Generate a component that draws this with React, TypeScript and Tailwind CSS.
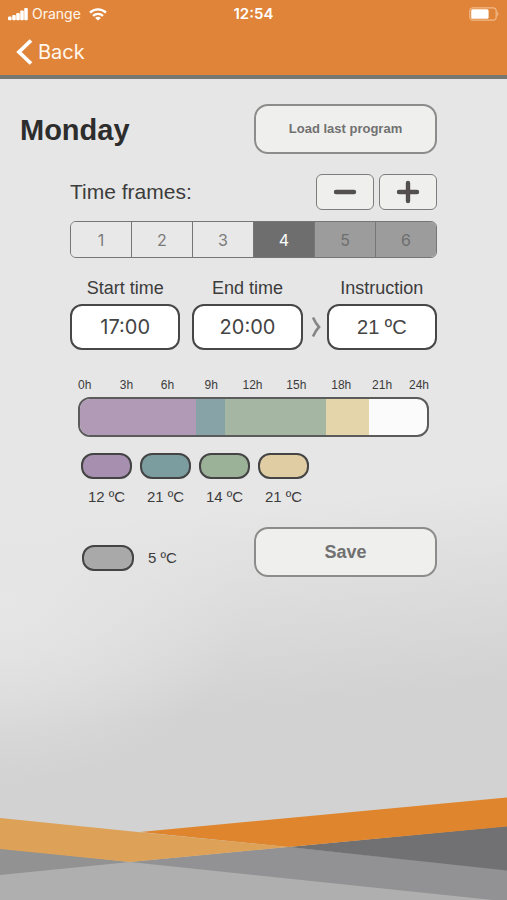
import { useState } from 'react';

const frames = [1, 2, 3, 4, 5, 6];
const frameCount = 4;

const fields = [
  { id: 'start', label: 'Start time', value: '17:00', font: 'font-[Inter,sans-serif]' },
  { id: 'end', label: 'End time', value: '20:00', font: 'font-[Inter,sans-serif]' },
  { id: 'instruction', label: 'Instruction', value: '21 ºC', font: '' },
];

const hours = ['0h', '3h', '6h', '9h', '12h', '15h', '18h', '21h', '24h'];

const slots = [
  { from: 0, to: 8, temp: '12 ºC', bar: 'bg-[#b09ab6]', pill: 'bg-[#a78fb0]' },
  { from: 8, to: 10, temp: '21 ºC', bar: 'bg-[#88a3a8]', pill: 'bg-[#7b9da0]' },
  { from: 10, to: 17, temp: '14 ºC', bar: 'bg-[#a5b7a2]', pill: 'bg-[#9bb198]' },
  { from: 17, to: 20, temp: '21 ºC', bar: 'bg-[#e5d5ab]', pill: 'bg-[#e0cda3]' },
];

const StatusBar = () => (
  <div className="grid h-7 grid-cols-3 items-center px-2 text-white">
    <div className="flex items-center gap-1">
      <svg width="20" height="13" viewBox="0 0 20 13" fill="currentColor" aria-hidden="true">
        <rect x="0" y="8.5" width="3.6" height="3.8" rx="1" />
        <rect x="4.2" y="7" width="3.6" height="5.3" rx="1" />
        <rect x="8.2" y="5" width="3.6" height="7.3" rx="1" />
        <rect x="12.2" y="2.5" width="3.6" height="9.8" rx="1" />
        <rect x="16.2" y="0" width="3.6" height="12.3" rx="1" />
      </svg>
      <span className="text-sm text-orange-50">Orange</span>
      <svg className="ml-1" width="18" height="13" viewBox="0 0 18 13" fill="none" stroke="currentColor" strokeWidth="2.4" aria-hidden="true">
        <path d="M1 4.6a11.6 11.6 0 0 1 16 0" />
        <path d="M4 7.8a7.4 7.4 0 0 1 10 0" />
        <path d="M9 12.6 6.1 9.9a4.4 4.4 0 0 1 5.8 0Z" fill="currentColor" stroke="none" />
      </svg>
    </div>
    <span className="text-center text-[15px] font-semibold">12:54</span>
    <svg className="justify-self-end" width="30" height="14" viewBox="0 0 30 14" aria-hidden="true">
      <rect x="0.8" y="0.8" width="26.4" height="12.4" rx="3.2" fill="none" stroke="#f0b987" strokeWidth="1.2" />
      <rect x="2.2" y="2.2" width="17.4" height="9.6" rx="1.6" fill="#fff" />
      <path d="M28.2 4.6c1.6.6 1.6 4.2 0 4.8Z" fill="#f0b987" />
    </svg>
  </div>
);

const Waves = () => (
  <svg className="mt-auto block h-[103px] w-full" viewBox="0 0 507 103" preserveAspectRatio="none" aria-hidden="true">
    <path d="M0 51 130 65 288 50 507 72V103H0Z" fill="#afafaf" />
    <path d="M0 51 130 65 0 78Z" fill="#929292" />
    <path d="M130 65 288 50 507 73V104.500Z" fill="#929294" />
    <path d="M288 50 507 29V73.500Z" fill="#717173" />
    <path d="M140 35 507 0.500V29.500L288 50Z" fill="#df852d" />
    <path d="M0 21 140 35.200 288 50 130 65 0 52Z" fill="#dda157" />
  </svg>
);

export default function App() {
  const [active, setActive] = useState(4);

  return (
    <div className="flex min-h-screen flex-col bg-[radial-gradient(ellipse_48%_20%_at_0%_67%,#e6e6e6,#e6e6e600),linear-gradient(174deg,#e6e6e6_56%,#d2d2d2_77%)] font-['Liberation_Sans',sans-serif] text-[#3c3c3c]">
      <header className="border-b-4 border-[#777771] bg-[#e08439] pb-2 font-[Inter,sans-serif]">
        <StatusBar />
        <button type="button" className="flex h-[39px] items-center gap-1 px-4 pt-2 text-xl text-orange-50">
          <svg width="18" height="26" viewBox="0 0 18 26" fill="none" stroke="#fff" strokeWidth="3.8" aria-hidden="true">
            <path d="M15 1.500 3 13 15 24.500" />
          </svg>
          Back
        </button>
      </header>

      <main>
        <div className="flex items-center justify-between pt-[25px] pr-[70px] pl-5">
          <h1 className="pt-1 text-[29px] font-bold text-[#2d2d2d]">Monday</h1>
          <button type="button" className="h-[50px] w-[183px] rounded-[14px] border-2 border-[#8c8c8c] bg-[#efefee] text-[13px] font-bold text-[#717171]">
            Load last program
          </button>
        </div>

        <div className="px-[70px]">
          <div className="mt-5 flex items-center justify-between">
            <span className="text-[21px]">Time frames:</span>
            <div className="flex gap-[5px]">
              <button type="button" aria-label="Remove frame" className="flex h-9 w-[58px] items-center justify-center rounded-md border border-[#7d7d7d] bg-[#efefee]">
                <svg width="24" height="24" viewBox="0 0 24 24" stroke="#534f4f" strokeWidth="4.400" strokeLinecap="round" aria-hidden="true">
                  <path d="M3 12h18" />
                </svg>
              </button>
              <button type="button" aria-label="Add frame" className="flex h-9 w-[58px] items-center justify-center rounded-md border border-[#7d7d7d] bg-[#efefee]">
                <svg width="24" height="24" viewBox="0 0 24 24" stroke="#534f4f" strokeWidth="4.400" strokeLinecap="round" aria-hidden="true">
                  <path d="M3 12h18M12 3v18" />
                </svg>
              </button>
            </div>
          </div>

          <div className="mt-[11px] flex h-[37px] divide-x divide-[#767676] overflow-hidden rounded-md border border-[#767676] font-[Inter,sans-serif] text-base">
            {frames.map((n) => (
              <button
                key={n}
                type="button"
                disabled={n > frameCount}
                aria-pressed={n === active}
                onClick={() => setActive(n)}
                className={`flex-1 ${
                  n === active ? 'bg-[#6e6e6e] text-white' : n > frameCount ? 'bg-[#9c9c9c] text-[#6e6e6e]' : 'bg-[#e8e8e8] text-[#7a7a7a]'
                }`}
              >
                {n}
              </button>
            ))}
          </div>

          <div className="mt-[18px] flex items-end">
            {fields.map((f, i) => (
              <div key={f.id} className="contents">
                {i === 1 && <div className="w-3" />}
                {i === 2 && (
                  <svg className="mb-3" width="24" height="22" viewBox="0 0 24 22" fill="none" stroke="#858585" strokeWidth="2.600" aria-hidden="true">
                    <path d="M10 1.500Q13 8 16 11Q13 14 10 20.500" />
                  </svg>
                )}
                <div className="flex min-w-0 flex-1 flex-col gap-1">
                  <label htmlFor={f.id} className="text-center text-lg leading-6">
                    {f.label}
                  </label>
                  <input
                    id={f.id}
                    defaultValue={f.value}
                    className={`h-[46px] w-full rounded-xl border-2 border-[#474747] bg-white text-center text-xl text-[#444] ${f.font}`}
                  />
                </div>
              </div>
            ))}
          </div>

          <div className="mt-[26px] px-2">
            <div className="grid grid-cols-[42fr_41fr_44fr_38fr_44fr_45fr_41fr_37fr_20fr] text-xs leading-[18px]">
              {hours.map((h) => (
                <span key={h}>{h}</span>
              ))}
            </div>
            <div className="mt-[3px] flex h-10 overflow-hidden rounded-xl border-2 border-[#5b5b5b] bg-[#fbfbfb]">
              {slots.map((s) => (
                <div key={s.from} className={s.bar} style={{ width: `${((s.to - s.from) / 24) * 100}%` }} />
              ))}
            </div>
          </div>

          <div className="mt-4 flex gap-2 pl-[11px]">
            {slots.map((s) => (
              <div key={s.from} className="flex flex-col items-center gap-2">
                <div className={`h-[26px] w-[51px] rounded-xl border-2 border-[#444] ${s.pill}`} />
                <span className="text-[15px] leading-5">{s.temp}</span>
              </div>
            ))}
          </div>

          <div className="mt-5 flex items-center justify-between pl-3">
            <div className="flex items-center gap-[14px] pt-3">
              <div className="h-[26px] w-[52px] rounded-xl border-2 border-[#444] bg-[#a9a9a9]" />
              <span className="text-[15px] leading-5">5 ºC</span>
            </div>
            <button type="button" className="h-[50px] w-[183px] rounded-[14px] border-2 border-[#8c8c8c] bg-[#efefee] text-lg font-bold text-[#717171]">
              Save
            </button>
          </div>
        </div>
      </main>

      <Waves />
    </div>
  );
}
